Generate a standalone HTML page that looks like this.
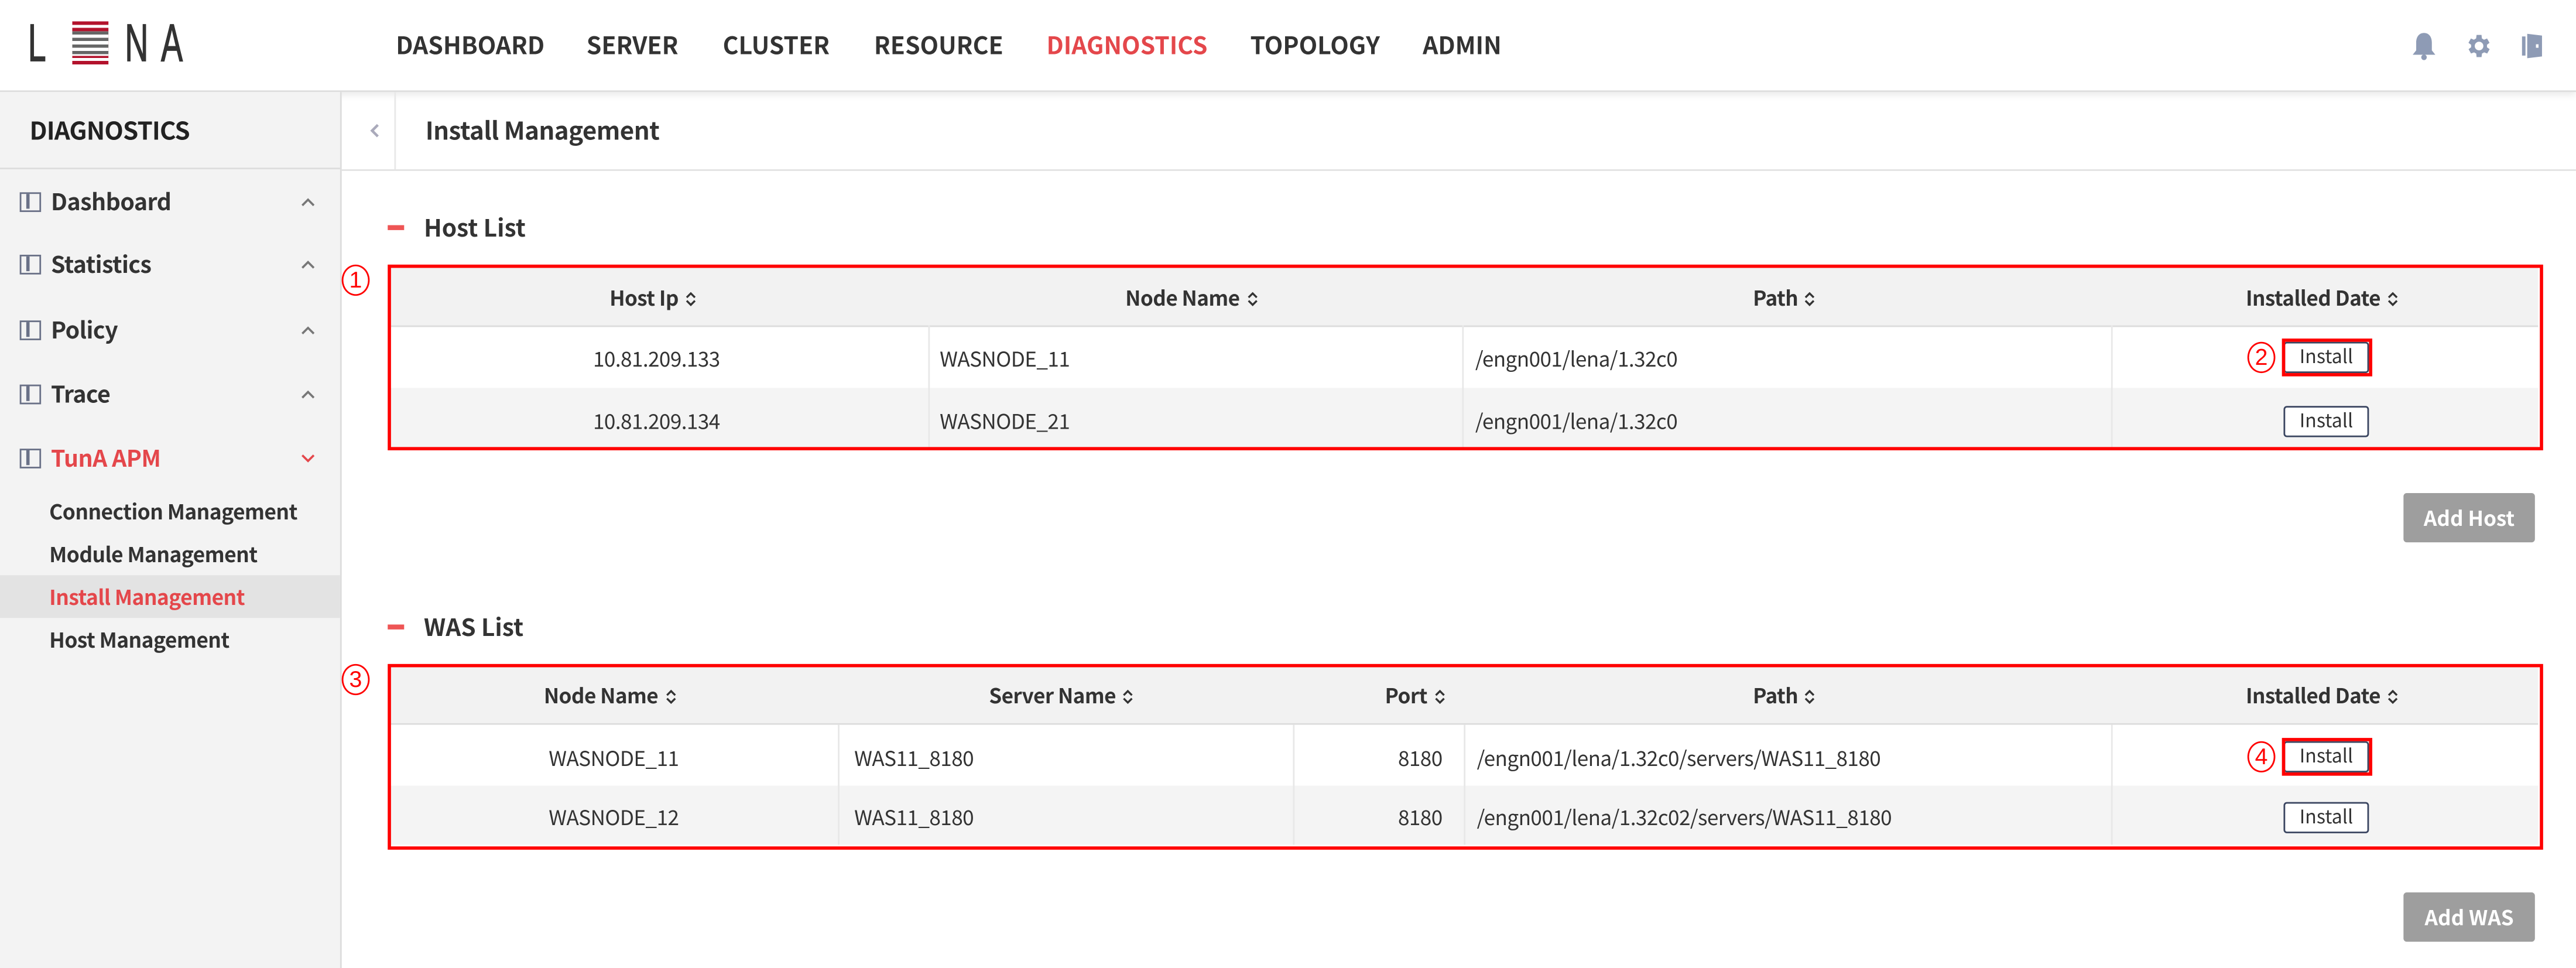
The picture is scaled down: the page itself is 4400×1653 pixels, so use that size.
<!DOCTYPE html>
<html><head><meta charset="utf-8"><style>
html,body{margin:0;padding:0;width:4400px;height:1653px;overflow:hidden;background:#fff}
#s{position:absolute;left:0;top:0;width:1568px;height:589px;transform:scale(2.8061,2.8065);transform-origin:0 0;font-family:"Noto Sans CJK KR","Liberation Sans",sans-serif;color:#222}
.a{position:absolute;white-space:nowrap}
.nav{top:18px;font-size:14.6px;font-weight:700;line-height:20px;color:#333}
.mi{left:12px;font-size:14px;font-weight:700;line-height:18px;color:#333;letter-spacing:-0.2px}
.mi i{display:inline-block;width:13px;height:12px;border:1.5px solid #6a7187;box-sizing:border-box;margin-right:6px;vertical-align:-1px;position:relative}
.mi i:after{content:"";position:absolute;left:3px;top:0;width:1.5px;height:9px;background:#6a7187}
.sub{left:30px;font-size:12.6px;font-weight:700;line-height:18px;color:#333;letter-spacing:-0.2px}
.sec{font-size:14.5px;font-weight:700;line-height:18px;color:#333}
.sec:before{content:"";display:inline-block;width:10px;height:3px;background:#e55;margin-right:12px;vertical-align:4px}
.box{position:absolute;border:2px solid #f00;box-sizing:border-box}
.th{position:absolute;background:#f2f2f2;border-bottom:1.5px solid #ddd}
.c{position:absolute;font-size:12.5px;line-height:16px;color:#333;white-space:nowrap;letter-spacing:-0.2px}
.h{font-weight:700;font-size:12.5px}
.h svg{margin-left:4px;vertical-align:-1px}
.btn{position:absolute;width:52px;height:19px;border:1px solid #3a4560;border-radius:2px;box-sizing:border-box;font-size:11.5px;line-height:17px;text-align:center;color:#333;background:#fff}
.rb{position:absolute;border:2px solid #f00;box-sizing:border-box}
.num{position:absolute;width:17px;height:19px;border:1px solid #f00;border-radius:50%;box-sizing:border-box;color:#f00;font-size:14px;line-height:17px;text-align:center;font-family:"Liberation Sans",sans-serif}
.gb{position:absolute;width:80px;height:30px;background:#9e9e9e;border-radius:2px;color:#fff;font-size:12.5px;font-weight:700;line-height:30px;text-align:center}
.vl{position:absolute;width:1px;background:#e8e8e8}
.lg{position:absolute;top:9px;font-size:32px;color:#333;font-family:'Liberation Sans',sans-serif;line-height:34px;transform:scaleX(0.62);transform-origin:0 0;font-weight:400;-webkit-text-stroke:0.6px #333}
</style></head><body><div id="s">
<div class="a" style="left:0;top:0;width:1568px;height:55px;background:#fff;border-bottom:1px solid #ddd;box-shadow:0 2px 4px rgba(0,0,0,.08)"></div>
<div class="lg" style="left:17px">L</div>
<div class="a" style="left:44px;top:13px;width:22px;height:27px;background:repeating-linear-gradient(#b3122c 0 2.2px,transparent 2.2px 4px)"></div>
<div class="a" style="left:44px;top:19px;width:22px;height:15px;background:#fff"></div>
<div class="a" style="left:44px;top:19px;width:22px;height:15px;background:repeating-linear-gradient(#666 0 2px,transparent 2px 4px)"></div>
<div class="lg" style="left:76px">N</div>
<div class="lg" style="left:98px">A</div>
<div class="a nav" style="left:241px">DASHBOARD</div>
<div class="a nav" style="left:357px">SERVER</div>
<div class="a nav" style="left:440px">CLUSTER</div>
<div class="a nav" style="left:532px">RESOURCE</div>
<div class="a nav" style="left:637px;color:#e4474b">DIAGNOSTICS</div>
<div class="a nav" style="left:761px">TOPOLOGY</div>
<div class="a nav" style="left:866px">ADMIN</div>
<svg class="a" style="left:1467px;top:19px" width="17" height="18" viewBox="0 0 16 17"><path d="M8 1C5 1 3.5 3.5 3.5 6.5V11L1.5 13.5H14.5L12.5 11V6.5C12.5 3.5 11 1 8 1Z" fill="#8e9bb5"/><circle cx="8" cy="15" r="1.6" fill="#8e9bb5"/></svg>
<svg class="a" style="left:1500px;top:19px" width="18" height="18" viewBox="0 0 24 24"><path fill="#8e9bb5" d="M19.4 13a7.5 7.5 0 000-2l2.1-1.6-2-3.5-2.5 1a7.6 7.6 0 00-1.7-1L15 3h-4l-.4 2.9a7.6 7.6 0 00-1.7 1l-2.5-1-2 3.5L6.6 11a7.5 7.5 0 000 2l-2.1 1.6 2 3.5 2.5-1a7.6 7.6 0 001.7 1L11 21h4l.4-2.9a7.6 7.6 0 001.7-1l2.5 1 2-3.5zM13 15.5a3.5 3.5 0 110-7 3.5 3.5 0 010 7z" transform="translate(-1 0)"/></svg>
<svg class="a" style="left:1534px;top:19px" width="15" height="18" viewBox="0 0 14 17"><rect x="1" y="3" width="2" height="11" fill="#8e9bb5"/><path d="M4 1.5L12.5 2.5V14.5L4 15.5Z" fill="#8e9bb5"/><rect x="9" y="7.5" width="1.5" height="2" fill="#fff"/></svg>
<div class="a" style="left:0;top:56px;width:207px;height:533px;background:#f3f3f3;border-right:1px solid #ddd"></div>
<div class="a" style="left:0;top:102px;width:207px;height:1px;background:#ddd"></div>
<div class="a" style="left:18px;top:71px;font-size:15px;font-weight:700;color:#222;line-height:18px;letter-spacing:-0.3px">DIAGNOSTICS</div>
<div class="a mi" style="top:114px"><i></i>Dashboard</div>
<div class="a mi" style="top:152px"><i></i>Statistics</div>
<div class="a mi" style="top:192px"><i></i>Policy</div>
<div class="a mi" style="top:231px"><i></i>Trace</div>
<div class="a mi" style="top:270px;color:#e4474b"><i></i>TunA APM</div>
<svg class="a" style="left:183px;top:120px" width="9" height="6"><path d="M1 5L4.5 1.5L8 5" fill="none" stroke="#777" stroke-width="1.3"/></svg>
<svg class="a" style="left:183px;top:158px" width="9" height="6"><path d="M1 5L4.5 1.5L8 5" fill="none" stroke="#777" stroke-width="1.3"/></svg>
<svg class="a" style="left:183px;top:198px" width="9" height="6"><path d="M1 5L4.5 1.5L8 5" fill="none" stroke="#777" stroke-width="1.3"/></svg>
<svg class="a" style="left:183px;top:237px" width="9" height="6"><path d="M1 5L4.5 1.5L8 5" fill="none" stroke="#777" stroke-width="1.3"/></svg>
<svg class="a" style="left:183px;top:276px" width="9" height="6"><path d="M1 1L4.5 4.5L8 1" fill="none" stroke="#e4474b" stroke-width="1.3"/></svg>
<div class="a sub" style="top:302px">Connection Management</div>
<div class="a sub" style="top:328px">Module Management</div>
<div class="a" style="left:0;top:350px;width:207px;height:26px;background:#e3e3e3"></div>
<div class="a sub" style="top:354px;color:#e4474b">Install Management</div>
<div class="a sub" style="top:380px">Host Management</div>
<div class="a" style="left:208px;top:56px;width:1360px;height:47px;border-bottom:1px solid #e3e3e3"></div>
<div class="a" style="left:240px;top:56px;width:1px;height:47px;background:#e8e8e8"></div>
<svg class="a" style="left:225px;top:75px" width="6" height="9"><path d="M5 1L1.5 4.5L5 8" fill="none" stroke="#aab" stroke-width="1.6"/></svg>
<div class="a" style="left:259px;top:71px;font-size:15px;font-weight:700;color:#333;line-height:18px;letter-spacing:-0.2px">Install Management</div>
<div class="a sec" style="left:236px;top:130px">Host List</div>
<div class="num" style="left:208px;top:161px">1</div>
<div class="th" style="left:238px;top:163px;width:1307px;height:35px"></div>
<div class="a" style="left:238px;top:236px;width:1307px;height:36px;background:#f4f4f4"></div>
<div class="vl" style="left:565px;top:198px;height:74px"></div><div class="vl" style="left:890px;top:198px;height:74px"></div><div class="vl" style="left:1285px;top:198px;height:74px"></div>
<div class="c h" style="left:371px;top:173px">Host Ip<svg width="7" height="10"><path d="M1 4L3.5 1.5L6 4M1 6L3.5 8.5L6 6" fill="none" stroke="#333" stroke-width="1.2"/></svg></div>
<div class="c h" style="left:685px;top:173px">Node Name<svg width="7" height="10"><path d="M1 4L3.5 1.5L6 4M1 6L3.5 8.5L6 6" fill="none" stroke="#333" stroke-width="1.2"/></svg></div>
<div class="c h" style="left:1067px;top:173px">Path<svg width="7" height="10"><path d="M1 4L3.5 1.5L6 4M1 6L3.5 8.5L6 6" fill="none" stroke="#333" stroke-width="1.2"/></svg></div>
<div class="c h" style="left:1367px;top:173px">Installed Date<svg width="7" height="10"><path d="M1 4L3.5 1.5L6 4M1 6L3.5 8.5L6 6" fill="none" stroke="#333" stroke-width="1.2"/></svg></div>
<div class="c" style="left:361px;top:210px">10.81.209.133</div><div class="c" style="left:572px;top:210px">WASNODE_11</div><div class="c" style="left:898px;top:210px">/engn001/lena/1.32c0</div>
<div class="c" style="left:361px;top:248px">10.81.209.134</div><div class="c" style="left:572px;top:248px">WASNODE_21</div><div class="c" style="left:898px;top:248px">/engn001/lena/1.32c0</div>
<div class="btn" style="left:1390px;top:208px">Install</div>
<div class="rb" style="left:1389px;top:206px;width:55px;height:23px"></div>
<div class="num" style="left:1368px;top:208px">2</div>
<div class="btn" style="left:1390px;top:247px">Install</div>
<div class="box" style="left:236px;top:161px;width:1312px;height:113px"></div>
<div class="gb" style="left:1463px;top:300px">Add Host</div>
<div class="a sec" style="left:236px;top:373px">WAS List</div>
<div class="num" style="left:208px;top:404px">3</div>
<div class="th" style="left:238px;top:406px;width:1307px;height:34px"></div>
<div class="a" style="left:238px;top:478px;width:1307px;height:36px;background:#f4f4f4"></div>
<div class="vl" style="left:510px;top:441px;height:73px"></div><div class="vl" style="left:787px;top:441px;height:73px"></div><div class="vl" style="left:891px;top:441px;height:73px"></div><div class="vl" style="left:1285px;top:441px;height:73px"></div>
<div class="c h" style="left:331px;top:415px">Node Name<svg width="7" height="10"><path d="M1 4L3.5 1.5L6 4M1 6L3.5 8.5L6 6" fill="none" stroke="#333" stroke-width="1.2"/></svg></div>
<div class="c h" style="left:602px;top:415px">Server Name<svg width="7" height="10"><path d="M1 4L3.5 1.5L6 4M1 6L3.5 8.5L6 6" fill="none" stroke="#333" stroke-width="1.2"/></svg></div>
<div class="c h" style="left:843px;top:415px">Port<svg width="7" height="10"><path d="M1 4L3.5 1.5L6 4M1 6L3.5 8.5L6 6" fill="none" stroke="#333" stroke-width="1.2"/></svg></div>
<div class="c h" style="left:1067px;top:415px">Path<svg width="7" height="10"><path d="M1 4L3.5 1.5L6 4M1 6L3.5 8.5L6 6" fill="none" stroke="#333" stroke-width="1.2"/></svg></div>
<div class="c h" style="left:1367px;top:415px">Installed Date<svg width="7" height="10"><path d="M1 4L3.5 1.5L6 4M1 6L3.5 8.5L6 6" fill="none" stroke="#333" stroke-width="1.2"/></svg></div>
<div class="c" style="left:334px;top:453px">WASNODE_11</div><div class="c" style="left:520px;top:453px">WAS11_8180</div><div class="c" style="left:851px;top:453px">8180</div><div class="c" style="left:899px;top:453px">/engn001/lena/1.32c0/servers/WAS11_8180</div>
<div class="c" style="left:334px;top:489px">WASNODE_12</div><div class="c" style="left:520px;top:489px">WAS11_8180</div><div class="c" style="left:851px;top:489px">8180</div><div class="c" style="left:899px;top:489px">/engn001/lena/1.32c02/servers/WAS11_8180</div>
<div class="btn" style="left:1390px;top:451px">Install</div>
<div class="rb" style="left:1389px;top:449px;width:55px;height:23px"></div>
<div class="num" style="left:1368px;top:451px">4</div>
<div class="btn" style="left:1390px;top:488px">Install</div>
<div class="box" style="left:236px;top:404px;width:1312px;height:113px"></div>
<div class="gb" style="left:1463px;top:543px">Add WAS</div>
</div></body></html>
